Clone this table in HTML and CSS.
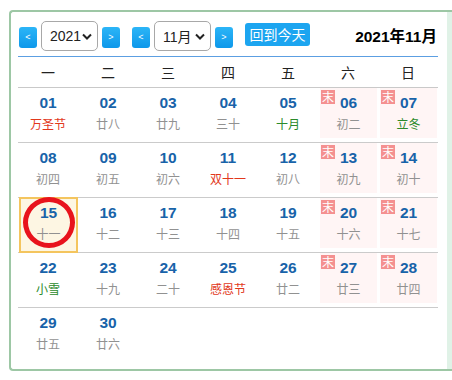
FILE: index.html
```html
<!DOCTYPE html>
<html lang="zh-CN">
<head>
<meta charset="utf-8">
<title>万年历</title>
<link rel="stylesheet" href="styles.css">
</head>
<body>
<div class="frame">
  <div class="cal">
    <div class="header">
      <div class="nav">
        <button class="arrow">&lt;</button>
        <div class="select"><span>2021</span><svg width="10" height="7" viewBox="0 0 10 7"><path d="M1 1.5 L5 5.5 L9 1.5" fill="none" stroke="#222" stroke-width="2"/></svg></div>
        <button class="arrow">&gt;</button>
      </div>
      <div class="nav">
        <button class="arrow">&lt;</button>
        <div class="select"><span>11月</span><svg width="10" height="7" viewBox="0 0 10 7"><path d="M1 1.5 L5 5.5 L9 1.5" fill="none" stroke="#222" stroke-width="2"/></svg></div>
        <button class="arrow">&gt;</button>
      </div>
      <button class="today-btn">回到今天</button>
      <div class="title">2021年11月</div>
    </div>
    <div class="weekdays">
      <div>一</div><div>二</div><div>三</div><div>四</div><div>五</div><div>六</div><div>日</div>
    </div>
    <div class="row">
      <div class="cell"><b>01</b><i class="fest">万圣节</i></div>
      <div class="cell"><b>02</b><i>廿八</i></div>
      <div class="cell"><b>03</b><i>廿九</i></div>
      <div class="cell"><b>04</b><i>三十</i></div>
      <div class="cell"><b>05</b><i class="term">十月</i></div>
      <div class="cell wk"><span class="badge">末</span><b>06</b><i>初二</i></div>
      <div class="cell wk"><span class="badge">末</span><b>07</b><i class="term">立冬</i></div>
    </div>
    <div class="row">
      <div class="cell"><b>08</b><i>初四</i></div>
      <div class="cell"><b>09</b><i>初五</i></div>
      <div class="cell"><b>10</b><i>初六</i></div>
      <div class="cell"><b>11</b><i class="fest">双十一</i></div>
      <div class="cell"><b>12</b><i>初八</i></div>
      <div class="cell wk"><span class="badge">末</span><b>13</b><i>初九</i></div>
      <div class="cell wk"><span class="badge">末</span><b>14</b><i>初十</i></div>
    </div>
    <div class="row">
      <div class="cell today"><span class="ring"></span><b>15</b><i>十一</i></div>
      <div class="cell"><b>16</b><i>十二</i></div>
      <div class="cell"><b>17</b><i>十三</i></div>
      <div class="cell"><b>18</b><i>十四</i></div>
      <div class="cell"><b>19</b><i>十五</i></div>
      <div class="cell wk"><span class="badge">末</span><b>20</b><i>十六</i></div>
      <div class="cell wk"><span class="badge">末</span><b>21</b><i>十七</i></div>
    </div>
    <div class="row">
      <div class="cell"><b>22</b><i class="term">小雪</i></div>
      <div class="cell"><b>23</b><i>十九</i></div>
      <div class="cell"><b>24</b><i>二十</i></div>
      <div class="cell"><b>25</b><i class="fest">感恩节</i></div>
      <div class="cell"><b>26</b><i>廿二</i></div>
      <div class="cell wk"><span class="badge">末</span><b>27</b><i>廿三</i></div>
      <div class="cell wk"><span class="badge">末</span><b>28</b><i>廿四</i></div>
    </div>
    <div class="row last">
      <div class="cell"><b>29</b><i>廿五</i></div>
      <div class="cell"><b>30</b><i>廿六</i></div>
    </div>
  </div>
  <div class="gap"></div>
  <div class="strip"></div>
</div>
</body>
</html>
```

FILE: styles.css
```css
html, body {
  margin: 0;
  padding: 0;
  background: #fff;
  overflow: hidden;
}
body {
  width: 452px;
  height: 380px;
  font-family: "Liberation Sans", "Noto Sans CJK SC", sans-serif;
  color: #333;
}
.frame {
  box-sizing: border-box;
  margin: 10px 0 0 9px;
  width: 460px;
  height: 361px;
  border: 2px solid #9dc7a5;
  border-right: none;
  border-radius: 4px 0 0 4px;
  display: grid;
  grid-template-columns: 7px 420px 9px 1fr;
}
.cal {
  grid-column: 2;
  display: flex;
  flex-direction: column;
}
.gap { grid-column: 3; }
.strip {
  grid-column: 4;
  background: #e0f2e7;
}
.header {
  box-sizing: border-box;
  height: 45px;
  padding: 9px 0 5px 1px;
  border-bottom: 1px solid #5c9fe2;
  display: flex;
  align-items: center;
  gap: 12px;
}
.nav {
  display: flex;
  align-items: center;
  gap: 4px;
}
.arrow {
  width: 18px;
  height: 21px;
  padding: 0;
  margin: 2px 0 0;
  border: none;
  border-radius: 3px;
  background: linear-gradient(#2cb5f7, #0d98ea);
  color: #fff;
  font-family: "Liberation Sans", sans-serif;
  font-size: 9px;
  line-height: 21px;
}
.select {
  box-sizing: border-box;
  width: 57px;
  height: 30px;
  border: 1px solid #a8a8a8;
  border-radius: 5px;
  background: #fff;
  display: flex;
  align-items: center;
  justify-content: space-between;
  padding: 0 5px 0 8px;
  font-size: 14px;
  color: #222;
}
.select svg { margin-top: 1px; }
.today-btn {
  width: 65px;
  height: 23px;
  padding: 0;
  border: none;
  border-radius: 3px;
  background: #1ca5f0;
  color: #fff;
  font-family: "Noto Sans CJK SC", sans-serif;
  font-size: 14px;
  line-height: 23px;
  margin-top: -3px;
}
.title {
  margin-left: auto;
  margin-right: 1px;
  margin-top: -2px;
  font-weight: bold;
  font-size: 15.5px;
  color: #000;
}
.weekdays {
  height: 30px;
  border-bottom: 1px solid #c9c9c9;
  display: grid;
  grid-template-columns: repeat(7, 60px);
  align-items: center;
  text-align: center;
  font-family: "Noto Sans CJK SC", sans-serif;
  font-size: 14px;
  color: #222;
}
.row {
  height: 54px;
  border-bottom: 1px solid #cbcbcb;
  display: grid;
  grid-template-columns: repeat(7, 60px);
}
.row.last {
  border-bottom: none;
  flex: 1;
}
.cell {
  position: relative;
  display: flex;
  flex-direction: column;
  align-items: center;
}
.cell b {
  margin-top: 5px;
  height: 20px;
  line-height: 20px;
  font-size: 15.5px;
  font-weight: bold;
  color: #1863a9;
}
.cell i {
  margin-top: 2px;
  font-style: normal;
  height: 18px;
  line-height: 18px;
  font-family: "Noto Sans CJK SC", sans-serif;
  font-size: 12px;
  color: #919191;
}
.cell i.fest { color: #e2381c; }
.cell i.term { color: #2b8a2b; }
.cell.wk {
  margin: 0 1px 4px 2px;
  background: #fff5f5;
}
.badge {
  position: absolute;
  top: 2px;
  left: 1px;
  width: 14px;
  height: 14px;
  background: #f49090;
  color: #fff;
  font-family: "Noto Sans CJK SC", sans-serif;
  font-size: 12px;
  line-height: 14px;
  text-align: center;
}
.cell.today {
  z-index: 1;
  margin: -1px 0 -1px 1px;
  border: 2px solid #f4c55e;
  background: #fdf6e3;
}
.cell.today b { margin-top: 4px; }
.ring {
  position: absolute;
  left: 2px;
  top: -2px;
  box-sizing: border-box;
  width: 52px;
  height: 51px;
  border: 5.5px solid #e8131c;
  border-radius: 50%;
}
```
